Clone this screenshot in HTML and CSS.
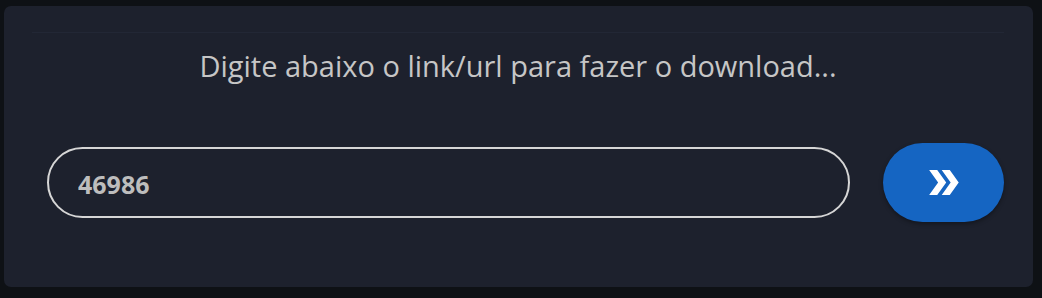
FILE: index.html
```html
<!DOCTYPE html>
<html lang="pt-BR">
<head>
<meta charset="utf-8">
<title>Download</title>
<link rel="stylesheet" href="styles.css">
</head>
<body>
<main class="card">
  <div class="divider"></div>
  <p class="title">Digite abaixo o link/url para fazer o download...</p>
  <form class="row">
    <input class="url-input" type="text" value="46986">
    <button class="go" type="button" aria-label="Download">
      <svg viewBox="0 0 24 24" width="43" height="43"><path fill="#fff" d="M15.5 5H11l5 7-5 7h4.5l5-7z M8.5 5H4l5 7-5 7h4.5l5-7z"/></svg>
    </button>
  </form>
</main>
</body>
</html>
```
FILE: styles.css
```css
html, body {
  margin: 0;
  padding: 0;
  background: #0e1115;
  height: 100%;
}
body {
  padding: 6px 9px 11px 4px;
  box-sizing: border-box;
  font-family: "Open Sans", "Noto Sans", sans-serif;
}
.card {
  background: #1d212d;
  border-radius: 7px;
  height: 281px;
  box-sizing: border-box;
  padding: 26px 29px 0 28px;
  display: flex;
  flex-direction: column;
}
.divider {
  height: 1px;
  background: #222735;
}
.title {
  margin: 16px 0 0;
  text-align: center;
  color: #c6c6c6;
  font-size: 29px;
  line-height: 34px;
}
.row {
  margin: 60px 0 0;
  display: flex;
  align-items: center;
  padding-left: 15px;
}
.url-input {
  width: 803px;
  height: 71px;
  box-sizing: border-box;
  border: 2px solid #d6d6d6;
  border-radius: 36px;
  background: transparent;
  color: #bdbdbd;
  font-family: "Open Sans", "Noto Sans", sans-serif;
  font-weight: 700;
  font-size: 25px;
  padding: 3px 0 0 29px;
  outline: none;
}
.go {
  margin-left: 33px;
  width: 121px;
  height: 79px;
  border: none;
  border-radius: 40px;
  background: #1565c2;
  display: flex;
  align-items: center;
  justify-content: center;
  padding: 0;
  box-shadow: 0 2px 4px rgba(0,0,0,0.35);
}
.go svg {
  display: block;
}
```
